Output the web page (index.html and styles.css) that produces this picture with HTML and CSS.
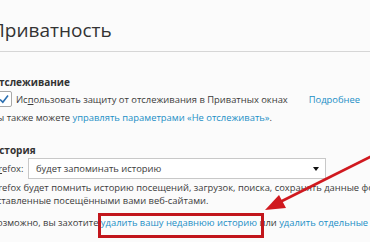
FILE: index.html
```html
<!DOCTYPE html>
<html lang="ru">

<head>
    <meta charset="UTF-8">
    <meta name="viewport" content="width=device-width, initial-scale=1.0">
    <title>Приватность</title>
    <link rel="stylesheet" href="styles.css">
</head>

<body>
    <div class="page">
        <div class="header">
            <h1 class="title">Приватность</h1>
        </div>

        <div class="content">
            <!-- Отслеживание -->
            <div class="group">
                <h2 class="caption">Отслеживание</h2>
                <div class="check-row">
                    <label class="check">
                        <span class="box">
                            <svg width="12" height="12" viewBox="0 0 12 12">
                                <path d="M2 6.5 L4.8 9.2 L10 2.5" fill="none" stroke="#2b6fb0" stroke-width="1.6" />
                            </svg>
                        </span>
                        Ис<u>п</u>ользовать защиту от отслеживания в Приватных окнах
                    </label>
                    <a class="link more" href="#">Подробнее</a>
                </div>
                <p class="line">Вы также можете <a class="link" href="#">управлять параметрами «Не отслеживать»</a>.</p>
            </div>

            <!-- История -->
            <div class="group history">
                <h2 class="caption">История</h2>
                <div class="select-row">
                    <label class="select-label">Fi<u>r</u>efox:</label>
                    <div class="select">
                        будет запоминать историю
                        <span class="caret"></span>
                    </div>
                </div>
                <p class="desc">Firefox будет помнить историю посещений, загрузок, поиска, сохранять данные форм и куки,<br>оставленные посещёнными вами веб-сайтами.</p>
                <p class="line maybe">Возможно, вы захотите <a class="link marked" href="#">удалить вашу недавнюю историю</a> или <a class="link" href="#">удалить отдельные куки</a>.</p>
            </div>
        </div>

        <!-- пометка поверх скриншота -->
        <div class="mark-box"></div>
        <svg class="mark-arrow" width="370" height="242" viewBox="0 0 370 242">
            <line x1="372" y1="156" x2="276" y2="204" stroke="#d0191f" stroke-width="2.6" />
            <polygon points="265,210 279,195 286,208" fill="#d0191f" />
        </svg>
    </div>
</body>

</html>
```

FILE: styles.css
```css
* {
    padding: 0;
    margin: 0;
    box-sizing: border-box;
}

html,
body {
    width: 100%;
    height: 100%;
}

body {
    background-color: #FBFBFB;
    font-family: "Open Sans", "Noto Sans", sans-serif;
    color: #3C3C3C;
    overflow: hidden;
}

.page {
    position: relative;
    height: 100%;
}

.header {
    height: 52px;
    padding: 18px 0 0 0;
    border-bottom: 1px solid #D6D6D6;
}

.title {
    margin-left: -9px;
    font-size: 19px;
    line-height: 24px;
    font-weight: 400;
    color: #333333;
    white-space: nowrap;
}

.content {
    margin-left: -9px;
    font-size: 9.4px;
    white-space: nowrap;
}

.group {
    padding-top: 22px;
}

.history {
    padding-top: 16px;
}

.caption {
    font-size: 10px;
    line-height: 16px;
    font-weight: 700;
    color: #333333;
}

.check-row {
    display: flex;
    align-items: center;
    height: 18px;
}

.check {
    display: flex;
    align-items: center;
    margin-left: 5px;
}

.check u,
.select-label u {
    text-decoration: underline;
}

.box {
    display: inline-flex;
    align-items: center;
    justify-content: center;
    width: 16px;
    height: 16px;
    margin-right: 4px;
    background-color: #FFFFFF;
    border: 1px solid #A8A8A8;
    border-radius: 2px;
}

.more {
    margin-left: 21px;
}

.line {
    line-height: 16px;
    margin-top: 2px;
}

.link {
    color: #1C8FC6;
    text-decoration: none;
}

.select-row {
    display: flex;
    align-items: center;
    height: 20px;
}

.select-label {
    width: 37px;
}

.select {
    position: relative;
    width: 298px;
    height: 21px;
    padding: 0 0 0 7px;
    line-height: 19px;
    background-color: #FFFFFF;
    border: 1px solid #C8C8C8;
}

.caret {
    position: absolute;
    right: 6px;
    top: 8px;
    border-left: 3px solid transparent;
    border-right: 3px solid transparent;
    border-top: 4px solid #111111;
}

.desc {
    margin-top: 3px;
    line-height: 13px;
}

.maybe {
    margin-top: 8px;
}

.mark-box {
    position: absolute;
    left: 98px;
    top: 213px;
    width: 166px;
    height: 25px;
    border: 3px solid #C2161C;
}

.mark-arrow {
    position: absolute;
    left: 0;
    top: 0;
}
```
